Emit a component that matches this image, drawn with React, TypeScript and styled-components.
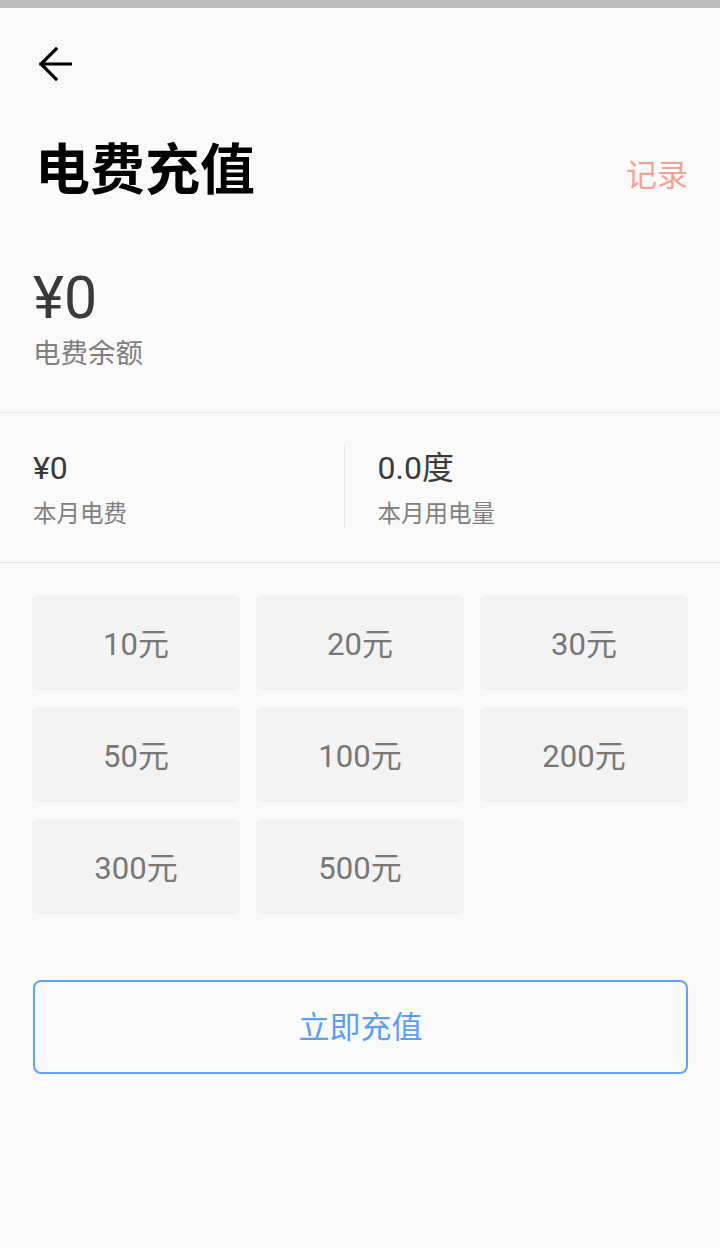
import React from "react";
import styled, {createGlobalStyle} from "styled-components";

const amounts = ["10元", "20元", "30元", "50元", "100元", "200元", "300元", "500元"];

export const App = () => {
    return (
        <Page>
            <GlobalStyle/>
            <StatusBar/>
            <NavBar>
                <BackButton aria-label="返回">
                    <svg width="34" height="34" viewBox="0 0 34 34" fill="none">
                        <path d="M3 17H33M18 2L3 17L18 32" stroke="#000" strokeWidth="3.2"
                              strokeLinecap="square" strokeLinejoin="miter"/>
                    </svg>
                </BackButton>
            </NavBar>

            <TitleRow>
                <Title>电费充值</Title>
                <RecordLink>记录</RecordLink>
            </TitleRow>

            <Balance>
                <BigValue>¥0</BigValue>
                <BalanceLabel>电费余额</BalanceLabel>
            </Balance>

            <StatsRow>
                <Stat>
                    <StatValue>¥0</StatValue>
                    <StatLabel>本月电费</StatLabel>
                </Stat>
                <Stat>
                    <StatValue>0.0度</StatValue>
                    <StatLabel>本月用电量</StatLabel>
                </Stat>
            </StatsRow>

            <AmountGrid>
                {amounts.map((a) => (
                    <AmountCard key={a}>{a}</AmountCard>
                ))}
            </AmountGrid>

            <PayButton>立即充值</PayButton>
        </Page>
    );
};

export default App;

const GlobalStyle = createGlobalStyle`
  html, body {
    margin: 0;
    padding: 0;
    background: #fafafa;
  }

  body {
    font-family: Roboto, "Noto Sans CJK SC", sans-serif;
  }
`;

const Page = styled.div`
  width: 720px;
  min-height: 1248px;
  background: #fafafa;
  display: flex;
  flex-direction: column;
`;

const StatusBar = styled.div`
  height: 8px;
  background: #bcbcbc;
`;

const NavBar = styled.div`
  height: 112px;
  display: flex;
  align-items: center;
  padding-left: 38px;
`;

const BackButton = styled.div`
  width: 34px;
  height: 34px;
  display: flex;
`;

const TitleRow = styled.div`
  height: 100px;
  display: flex;
  align-items: center;
  justify-content: space-between;
  padding: 0 32px 0 35px;
`;

const Title = styled.h1`
  margin: 0;
  font-size: 55px;
  line-height: 1;
  font-weight: 700;
  color: #000;
`;

const RecordLink = styled.span`
  font-size: 31px;
  color: #f6a196;
  margin-top: 5px;
`;

const Balance = styled.div`
  padding: 48px 33px 40px;
  display: flex;
  flex-direction: column;
  gap: 8px;
  border-bottom: 1px solid #e4e4e4;
`;

const BigValue = styled.div`
  font-size: 59px;
  line-height: 60px;
  color: #3a3a3a;
`;

const BalanceLabel = styled.div`
  font-size: 27.5px;
  line-height: 36px;
  color: #7f7f7f;
`;

const StatsRow = styled.div`
  display: flex;
  padding: 32px 32px 33px 0;
  border-bottom: 1px solid #e4e4e4;
`;

const Stat = styled.div`
  flex: 1;
  padding: 3px 0 0 33px;
  display: flex;
  flex-direction: column;
  gap: 11px;

  & + & {
    border-left: 1px solid #e8e8e8;
  }
`;

const StatValue = styled.div`
  font-size: 32px;
  line-height: 40px;
  color: #3a3a3a;
`;

const StatLabel = styled.div`
  font-size: 23.5px;
  line-height: 30px;
  color: #808080;
`;

const AmountGrid = styled.div`
  display: grid;
  grid-template-columns: repeat(3, 208px);
  grid-auto-rows: 95px;
  column-gap: 16px;
  row-gap: 17px;
  padding: 32px 32px 0;
`;

const AmountCard = styled.div`
  display: flex;
  align-items: center;
  justify-content: center;
  padding-bottom: 3px;
  background: #f3f3f3;
  border-radius: 6px;
  font-size: 31px;
  color: #777;
`;

const PayButton = styled.div`
  margin: 66px 32px 0 33px;
  height: 90px;
  box-sizing: content-box;
  border: 2px solid #64a2f8;
  border-radius: 8px;
  display: flex;
  align-items: center;
  justify-content: center;
  padding-bottom: 0;
  line-height: 1;
  font-size: 31px;
  color: #5c9ef5;
`;
